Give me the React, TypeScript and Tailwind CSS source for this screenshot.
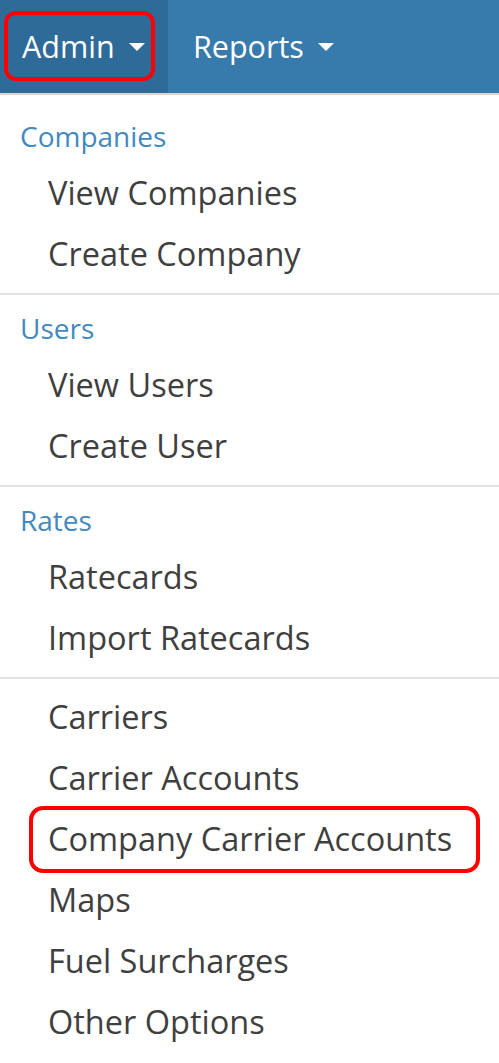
import React from "react"

const font = { fontFamily: '"Open Sans", "Noto Sans", sans-serif' }

function Caret() {
  return <span className="ml-[14px] inline-block h-0 w-0 border-x-[8px] border-t-[8px] border-x-transparent border-t-white" />
}

function Header({ label }: { label: string }) {
  return (
    <div className="flex h-[60px] items-center pl-[20px] pt-[6px] text-[28px] text-[#4389c0]">{label}</div>
  )
}

function Item({ label, marked }: { label: string; marked?: boolean }) {
  return (
    <div className="relative flex h-[61px] items-center pl-[48px] text-[32.5px] text-[#3f3f3f]">
      {marked && (
        <div className="absolute -top-[3px] -bottom-[3px] left-[29px] right-[19px] rounded-[14px] border-[4px] border-[#ff0000]" />
      )}
      <span className="relative">{label}</span>
    </div>
  )
}

function Separator() {
  return <div className="h-[2px] bg-[#e3e3e3]" />
}

const sections = [
  { title: "Companies", items: ["View Companies", "Create Company"] },
  { title: "Users", items: ["View Users", "Create User"] },
  { title: "Rates", items: ["Ratecards", "Import Ratecards"] },
]

const others = ["Carriers", "Carrier Accounts", "Company Carrier Accounts", "Maps", "Fuel Surcharges", "Other Options"]

export default function App() {
  return (
    <div className="h-[1063px] w-[499px] overflow-hidden bg-white" style={font}>
      <nav className="flex h-[93px] bg-[#377bad] text-[30.5px] text-white">
        <div className="relative flex w-[168px] items-center bg-[#2e6b99] pl-[22px]">
          <div className="absolute left-[4px] top-[11px] h-[70px] w-[151px] rounded-[12px] border-[4px] border-[#ff0000]" />
          <span>Admin</span>
          <Caret />
        </div>
        <div className="flex items-center pl-[25px]">
          <span>Reports</span>
          <Caret />
        </div>
      </nav>
      <div className="h-[2px] bg-[#d6d6d6]" />
      <div className="pt-[8px]">
        {sections.map((s, i) => (
          <div key={s.title}>
            {i > 0 && <Separator />}
            <Header label={s.title} />
            {s.items.map((it) => (
              <Item key={it} label={it} />
            ))}
            <div className="h-[8px]" />
          </div>
        ))}
        <Separator />
        <div className="pt-[8px]">
          {others.map((it) => (
            <Item key={it} label={it} marked={it === "Company Carrier Accounts"} />
          ))}
        </div>
      </div>
    </div>
  )
}
